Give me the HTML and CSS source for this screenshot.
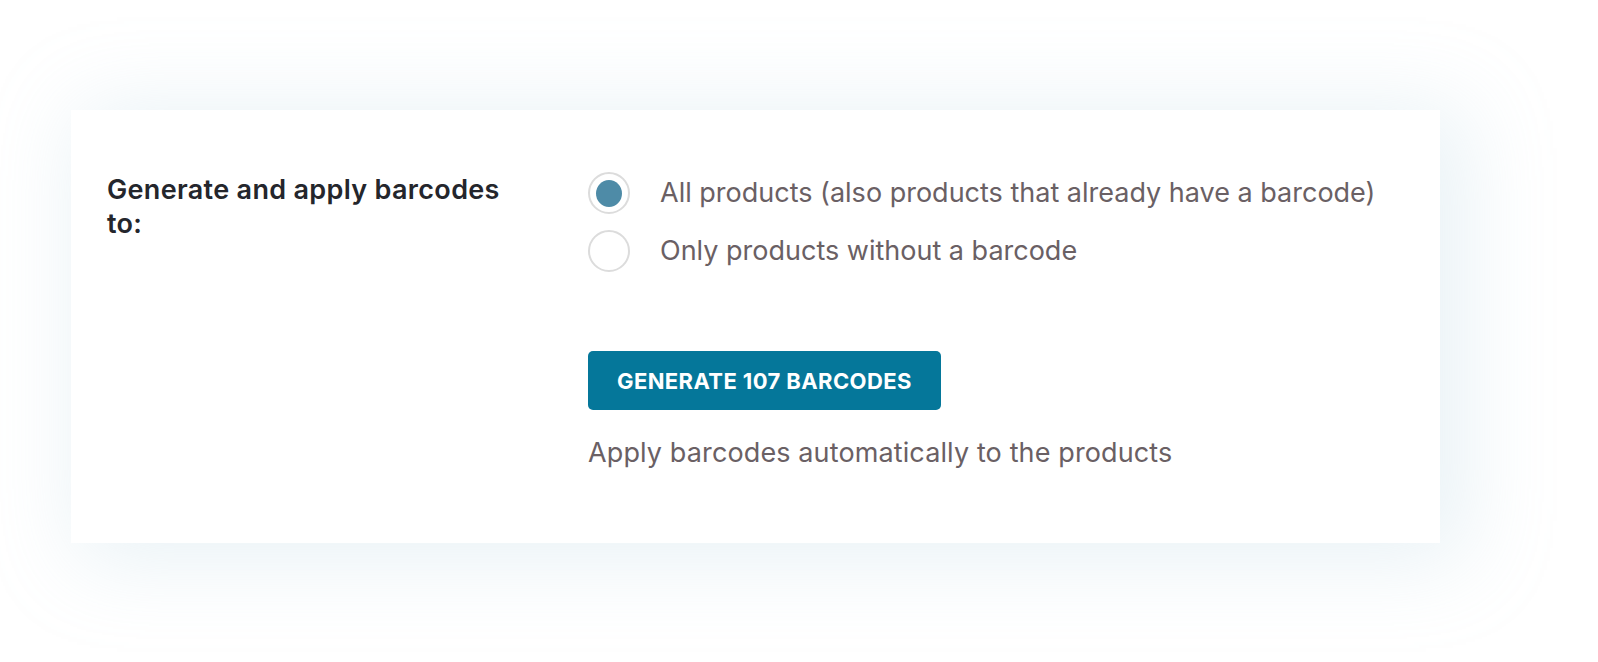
FILE: index.html
```html
<!DOCTYPE html>
<html lang="en">
<head>
<meta charset="utf-8">
<title>Generate barcodes</title>
<link rel="stylesheet" href="styles.css">
</head>
<body>
<div class="stage">
  <section class="card">
    <div class="label">Generate and apply barcodes to:</div>
    <div class="controls">
      <div class="options">
        <label class="option">
          <span class="radio checked"><span class="dot"></span></span>
          <span class="option-text">All products (also products that already have a barcode)</span>
        </label>
        <label class="option">
          <span class="radio"></span>
          <span class="option-text">Only products without a barcode</span>
        </label>
      </div>
      <button class="btn" type="button">GENERATE 107 BARCODES</button>
      <p class="hint">Apply barcodes automatically to the products</p>
    </div>
  </section>
</div>
</body>
</html>
```

FILE: styles.css
```css
* { box-sizing: border-box; }
html, body {
  margin: 0;
  padding: 0;
  background: #ffffff;
}
body {
  font-family: Inter, "Noto Sans", "Liberation Sans", sans-serif;
  width: 1598px;
  height: 662px;
  overflow: hidden;
}
.stage {
  padding: 110px 0 0 71px;
}
.card {
  width: 1369px;
  height: 433px;
  background: #ffffff;
  box-shadow: 16px 8px 80px 10px rgba(170, 205, 220, 0.26);
  display: grid;
  grid-template-columns: 481px 1fr;
  padding: 59px 0 0 36px;
}
.label {
  margin-top: 4px;
  font-size: 27px;
  line-height: 34px;
  font-weight: 600;
  letter-spacing: 0.32px;
  color: #24262c;
  width: 420px;
}
.controls {
  padding-top: 3px;
  display: flex;
  flex-direction: column;
  align-items: flex-start;
}
.options {
  display: flex;
  flex-direction: column;
  gap: 16px;
}
.option {
  display: flex;
  align-items: center;
  gap: 30px;
  height: 42px;
}
.radio {
  width: 42px;
  height: 42px;
  border-radius: 50%;
  border: 2px solid #dcdcdc;
  display: flex;
  align-items: center;
  justify-content: center;
  flex: none;
}
.dot {
  width: 26px;
  height: 27px;
  border-radius: 50%;
  background: #4e8ba7;
}
.option-text {
  font-size: 27px;
  line-height: 42px;
  color: #6a6064;
}
.btn {
  margin-top: 79px;
  height: 59px;
  padding: 0 29px;
  border: none;
  border-radius: 5px;
  background: #05779a;
  color: #ffffff;
  font-family: inherit;
  font-size: 22px;
  font-weight: 700;
  letter-spacing: 0.4px;
}
.hint {
  margin: 25px 0 0;
  font-size: 27px;
  line-height: 36px;
  letter-spacing: 0.12px;
  color: #6a6064;
}
```
